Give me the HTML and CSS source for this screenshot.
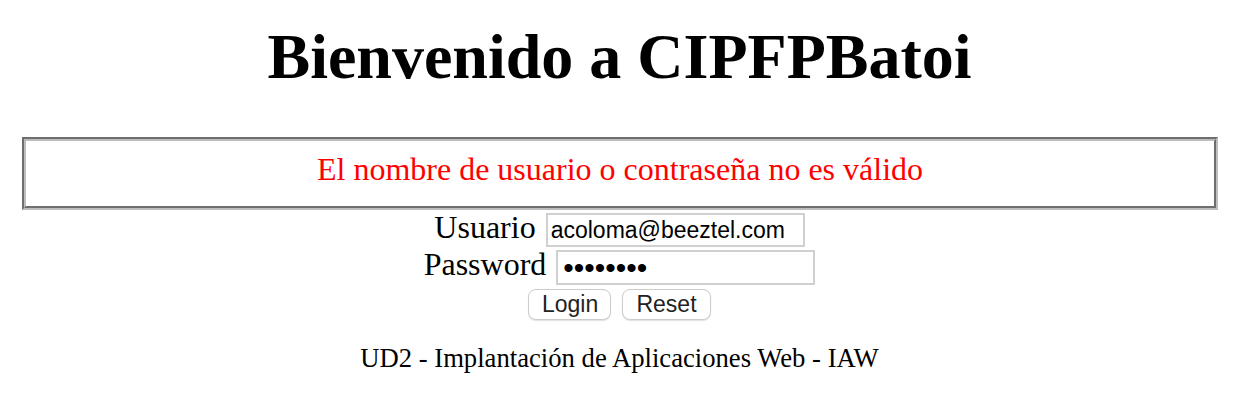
FILE: index.html
```html
<!DOCTYPE html>
<html lang="es">
<head>
<meta charset="utf-8">
<title>Bienvenido a CIPFPBatoi</title>
<link rel="stylesheet" href="styles.css">
</head>
<body>
<h1 class="title">Bienvenido a CIPFPBatoi</h1>
<div class="error-box">
  <div class="error-cell">El nombre de usuario o contraseña no es válido</div>
</div>
<form class="login-form">
  <div class="form-row">
    <label class="form-label" for="user">Usuario</label>
    <input class="form-input input-user" id="user" type="text" value="acoloma@beeztel.com">
  </div>
  <div class="form-row">
    <label class="form-label" for="pass">Password</label>
    <input class="form-input input-pass" id="pass" type="password" value="12345678">
  </div>
  <div class="form-buttons">
    <button class="btn btn-login" type="button">Login</button>
    <button class="btn btn-reset" type="button">Reset</button>
  </div>
</form>
<p class="footer">UD2 - Implantación de Aplicaciones Web - IAW</p>
</body>
</html>
```

FILE: styles.css
```css
html, body {
  margin: 0;
  padding: 0;
  background: #ffffff;
}

body {
  font-family: "Liberation Serif", "Times New Roman", serif;
  color: #000000;
  padding-right: 3px;
}

.title {
  font-size: 64px;
  font-weight: bold;
  text-align: center;
  margin: 21px 0 44px;
  line-height: 72px;
}

.error-box {
  margin: 0 21px 0 22px;
  border: 2px solid;
  border-color: #6e6e6e #bdbdbd #bdbdbd #6e6e6e;
}

.error-cell {
  border: 2px solid;
  border-color: #bdbdbd #6e6e6e #6e6e6e #bdbdbd;
  color: #ff0000;
  font-size: 32px;
  line-height: 36px;
  text-align: center;
  padding: 10px 0 19px;
}

.login-form {
  display: flex;
  flex-direction: column;
  align-items: center;
  margin-top: 3px;
}

.form-row {
  display: flex;
  align-items: flex-start;
  gap: 10px;
  margin-bottom: 3px;
}

.form-label {
  font-size: 32px;
  line-height: 28px;
}

.form-input {
  box-sizing: border-box;
  width: 259px;
  height: 35px;
  margin: 0;
  padding: 0 3px;
  border: 2px solid #d0d0d0;
  font-family: "Liberation Sans", Arial, sans-serif;
  font-size: 23px;
  color: #000000;
  background: #ffffff;
  outline: none;
}

.input-user {
  height: 34px;
}

.input-pass {
  font-size: 30px;
  padding: 0 5px;
}

.form-buttons {
  display: flex;
  gap: 11px;
  margin-top: 1px;
}

.btn {
  box-sizing: border-box;
  height: 31px;
  padding: 0 13px;
  border: 1px solid #cccccc;
  border-radius: 8px;
  background: #ffffff;
  box-shadow: 0 1px 1px rgba(0, 0, 0, 0.12);
  font-family: "Liberation Sans", Arial, sans-serif;
  font-size: 23px;
  line-height: 29px;
  color: #222222;
}

.btn-login {
  width: 83px;
}

.btn-reset {
  width: 89px;
}

.footer {
  font-size: 26.67px;
  text-align: center;
  margin: 23px 0 0;
  line-height: 30px;
}
```
